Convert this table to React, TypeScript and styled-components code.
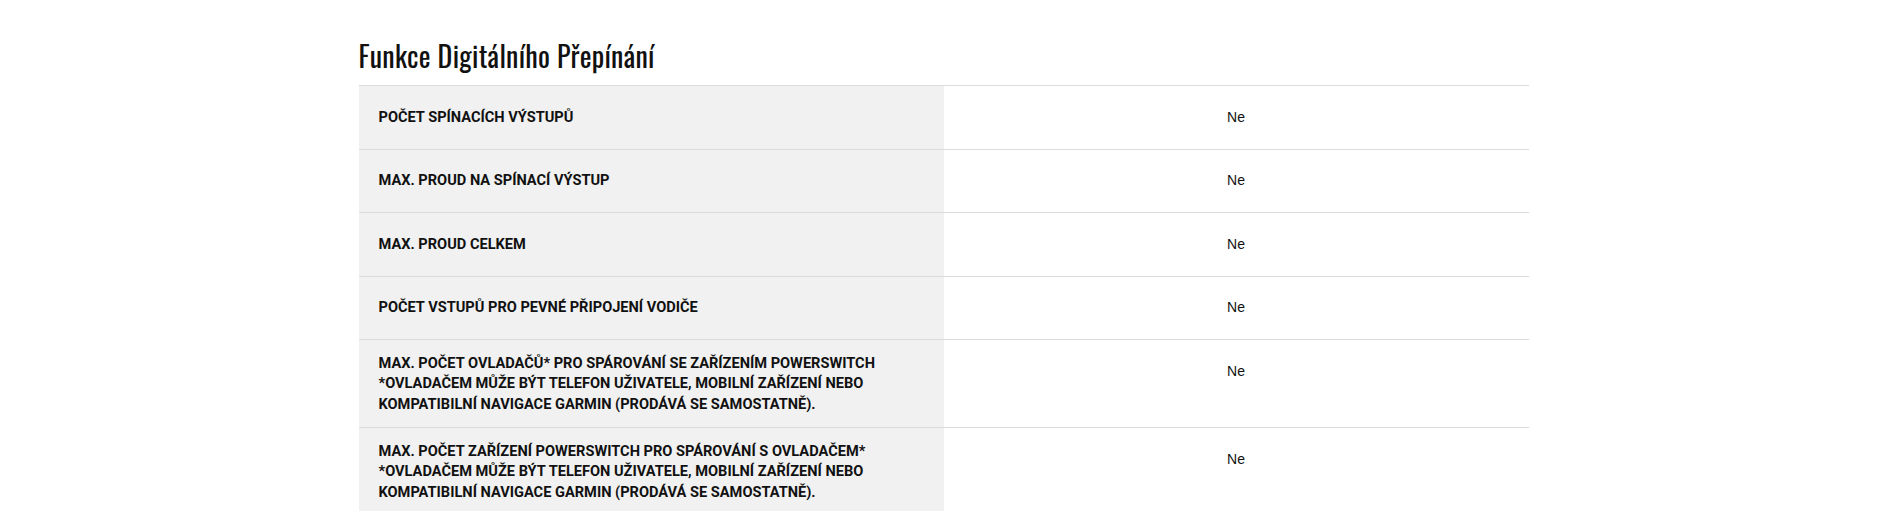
import React from 'react';
import styled, { createGlobalStyle } from 'styled-components';

const GlobalStyle = createGlobalStyle`
  html, body {
    margin: 0;
    padding: 0;
    background: #fff;
  }
  body {
    font-family: "Liberation Sans", Arial, sans-serif;
    color: #111;
  }
`

type Spec = {
  label: React.ReactNode
  value: string
}

const specs: Spec[] = [
  { label: 'POČET SPÍNACÍCH VÝSTUPŮ', value: 'Ne' },
  { label: 'MAX. PROUD NA SPÍNACÍ VÝSTUP', value: 'Ne' },
  { label: 'MAX. PROUD CELKEM', value: 'Ne' },
  { label: 'POČET VSTUPŮ PRO PEVNÉ PŘIPOJENÍ VODIČE', value: 'Ne' },
  {
    label: (
      <>
        MAX. POČET OVLADAČŮ* PRO SPÁROVÁNÍ SE ZAŘÍZENÍM POWERSWITCH<br />
        *OVLADAČEM MŮŽE BÝT TELEFON UŽIVATELE, MOBILNÍ ZAŘÍZENÍ NEBO<br />
        KOMPATIBILNÍ NAVIGACE GARMIN (PRODÁVÁ SE SAMOSTATNĚ).
      </>
    ),
    value: 'Ne',
  },
  {
    label: (
      <>
        MAX. POČET ZAŘÍZENÍ POWERSWITCH PRO SPÁROVÁNÍ S OVLADAČEM*<br />
        *OVLADAČEM MŮŽE BÝT TELEFON UŽIVATELE, MOBILNÍ ZAŘÍZENÍ NEBO<br />
        KOMPATIBILNÍ NAVIGACE GARMIN (PRODÁVÁ SE SAMOSTATNĚ).
      </>
    ),
    value: 'Ne',
  },
]

const App: React.FC = () => {
  return (
    <Page>
      <GlobalStyle />
      <Container>
        <Title>Funkce Digitálního Přepínání</Title>
        <SpecTable>
          {specs.map((spec, i) => (
            <Row key={i}>
              <Label>{spec.label}</Label>
              <Value>{spec.value}</Value>
            </Row>
          ))}
        </SpecTable>
      </Container>
    </Page>
  )
}

const Page = styled.div`
  padding-top: 39px;
`
const Container = styled.div`
  width: 1170px;
  margin: 0 auto;
`
const Title = styled.h2`
  margin: 0 0 13px;
  font-family: "Oswald", "Liberation Sans Narrow", "DejaVu Sans Condensed", "Liberation Sans", sans-serif;
  font-weight: 400;
  font-size: 28px;
  line-height: 33px;
  color: #111;
  letter-spacing: 0.3px;
`
const SpecTable = styled.div`
  display: flex;
  flex-direction: column;
`
const Row = styled.div`
  display: grid;
  grid-template-columns: 1fr 1fr;
  min-height: 62.5px;
  border-top: 1px solid #dcdcdc;
`
const Label = styled.div`
  display: flex;
  align-items: center;
  padding: 12.5px 20px;
  background-color: #f1f1f1;
  font-family: Roboto, "Liberation Sans", sans-serif;
  font-weight: 700;
  font-size: 14.6px;
  line-height: 20.7px;
  color: #111;
  text-transform: uppercase;
`
const Value = styled.div`
  padding: 20.5px 15px;
  text-align: center;
  font-family: "Liberation Sans", Arial, sans-serif;
  font-size: 14px;
  line-height: 21px;
  color: #111;
`
export default App
